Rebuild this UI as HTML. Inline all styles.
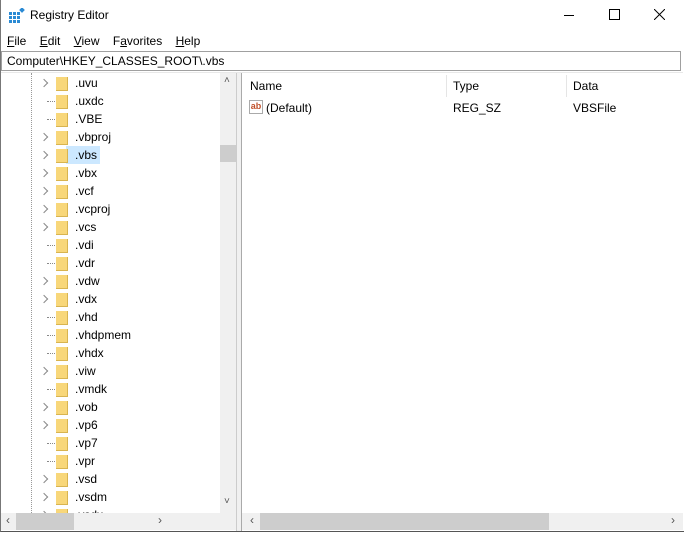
<!DOCTYPE html><html><head><style>
body{margin:0;width:684px;height:533px;overflow:hidden;background:#fff;font-family:"Liberation Sans",sans-serif;font-size:12px;color:#000;position:relative}
.a{position:absolute}
.row{position:absolute;left:0;height:18px;line-height:18px}
.fold{position:absolute;left:55px;top:3px;width:12px;height:14px;background:#f8d77a;border-right:1px solid #d8b450;border-bottom:1px solid #d8b450;box-sizing:border-box}
.txt{position:absolute;left:74px;top:0}
.chev{position:absolute;left:40px;top:6px;width:5px;height:5px;border-right:1.2px solid #888;border-top:1.2px solid #888;transform:rotate(45deg)}
.dot{position:absolute;left:46px;top:9px;width:8px;border-top:1px dotted #888}
</style></head><body>
<div class="a" style="left:0;top:0;width:683px;height:531px;border-right:1px solid #777;border-left:1px solid #777;border-bottom:1px solid #555"></div>
<svg class="a" style="left:9px;top:8px" width="16" height="16"><g fill="#2a8ad4"><rect x="0" y="4" width="3" height="3"/><rect x="4" y="4" width="3" height="3"/><rect x="8" y="4" width="3" height="3"/><rect x="0" y="8" width="3" height="3"/><rect x="4" y="8" width="3" height="3"/><rect x="8" y="8" width="3" height="3"/><rect x="0" y="12" width="3" height="3"/><rect x="4" y="12" width="3" height="3"/><rect x="8" y="12" width="3" height="3"/><rect x="11" y="0" width="4" height="4" transform="rotate(45 13 2)"/></g></svg>
<div class="a" style="left:30px;top:8px;font-size:12px">Registry Editor</div>
<div class="a" style="left:564px;top:15px;width:10px;border-top:1px solid #000"></div>
<div class="a" style="left:609px;top:9px;width:9px;height:9px;border:1px solid #000"></div>
<svg class="a" style="left:654px;top:9px" width="11" height="11"><path d="M0 0L11 11M11 0L0 11" stroke="#000" stroke-width="1"/></svg>
<div class="a" style="left:7px;top:34px;word-spacing:0"><u>F</u>ile&nbsp;&nbsp;&nbsp;&nbsp;<u>E</u>dit&nbsp;&nbsp;&nbsp;&nbsp;<u>V</u>iew&nbsp;&nbsp;&nbsp;&nbsp;F<u>a</u>vorites&nbsp;&nbsp;&nbsp;&nbsp;<u>H</u>elp</div>
<div class="a" style="left:1px;top:51px;width:680px;height:20px;border:1px solid #a0a0a0;box-sizing:border-box"></div>
<div class="a" style="left:7px;top:54px">Computer\HKEY_CLASSES_ROOT\.vbs</div>
<div class="a" style="left:1px;top:72px;width:682px;height:1px;background:#e8e8e8"></div>
<div class="a" style="left:236px;top:73px;width:6px;height:458px;background:#f0f0f0;border-left:1px solid #ccc;border-right:1px solid #aaa;box-sizing:border-box"></div>
<div class="a" style="left:31px;top:73px;height:440px;border-left:1px dotted #999"></div>
<div class="a" style="left:66px;top:146px;width:34px;height:18px;background:#cce8ff"></div>
<div class="a" style="left:1px;top:74px;width:219px;height:439px;overflow:hidden" id="tree"></div>
<div class="a" style="left:220px;top:73px;width:16px;height:440px;background:#f0f0f0"></div>
<div class="a" style="left:224px;top:75px;font-size:10px;color:#555">˄</div>
<div class="a" style="left:220px;top:145px;width:16px;height:17px;background:#cdcdcd"></div>
<div class="a" style="left:224px;top:496px;font-size:10px;color:#555">˅</div>
<div class="a" style="left:1px;top:513px;width:235px;height:17px;background:#f0f0f0"></div>
<div class="a" style="left:16px;top:513px;width:58px;height:17px;background:#cdcdcd"></div>
<div class="a" style="left:6px;top:513px;color:#555">‹</div><div class="a" style="left:158px;top:513px;color:#555">›</div>
<div class="a" style="left:220px;top:513px;width:16px;height:17px;background:#f0f0f0"></div>
<div class="a" style="left:242px;top:513px;width:441px;height:17px;background:#f0f0f0"></div>
<div class="a" style="left:260px;top:513px;width:289px;height:17px;background:#cdcdcd"></div>
<div class="a" style="left:250px;top:513px;color:#555">‹</div><div class="a" style="left:671px;top:513px;color:#555">›</div>
<div class="a" style="left:250px;top:79px">Name</div>
<div class="a" style="left:446px;top:75px;width:1px;height:22px;background:#e5e5e5"></div>
<div class="a" style="left:453px;top:79px">Type</div>
<div class="a" style="left:566px;top:75px;width:1px;height:22px;background:#e5e5e5"></div>
<div class="a" style="left:573px;top:79px">Data</div>
<div class="a" style="left:249px;top:100px;width:14px;height:14px;border:1px solid #aaa;box-sizing:border-box;font-size:9px;font-weight:bold;color:#c0502a;line-height:11px;text-align:center">ab</div>
<div class="a" style="left:266px;top:101px">(Default)</div>
<div class="a" style="left:453px;top:101px">REG_SZ</div>
<div class="a" style="left:573px;top:101px">VBSFile</div>
<script>
var items=[["uvu",1],["uxdc",0],["VBE",0],["vbproj",1],["vbs",1],["vbx",1],["vcf",1],["vcproj",1],["vcs",1],["vdi",0],["vdr",0],["vdw",1],["vdx",1],["vhd",0],["vhdpmem",0],["vhdx",0],["viw",1],["vmdk",0],["vob",1],["vp6",1],["vp7",0],["vpr",0],["vsd",1],["vsdm",1],["vsdx",1]];
var h="";items.forEach(function(it,i){h+='<div class="row" style="top:'+(i*18)+'px;width:219px">'+(it[1]?'<div class="chev"></div>':'<div class="dot"></div>')+'<div class="fold"></div><div class="txt">.'+it[0]+'</div></div>';});
document.getElementById("tree").innerHTML=h;
</script>
</body></html>
